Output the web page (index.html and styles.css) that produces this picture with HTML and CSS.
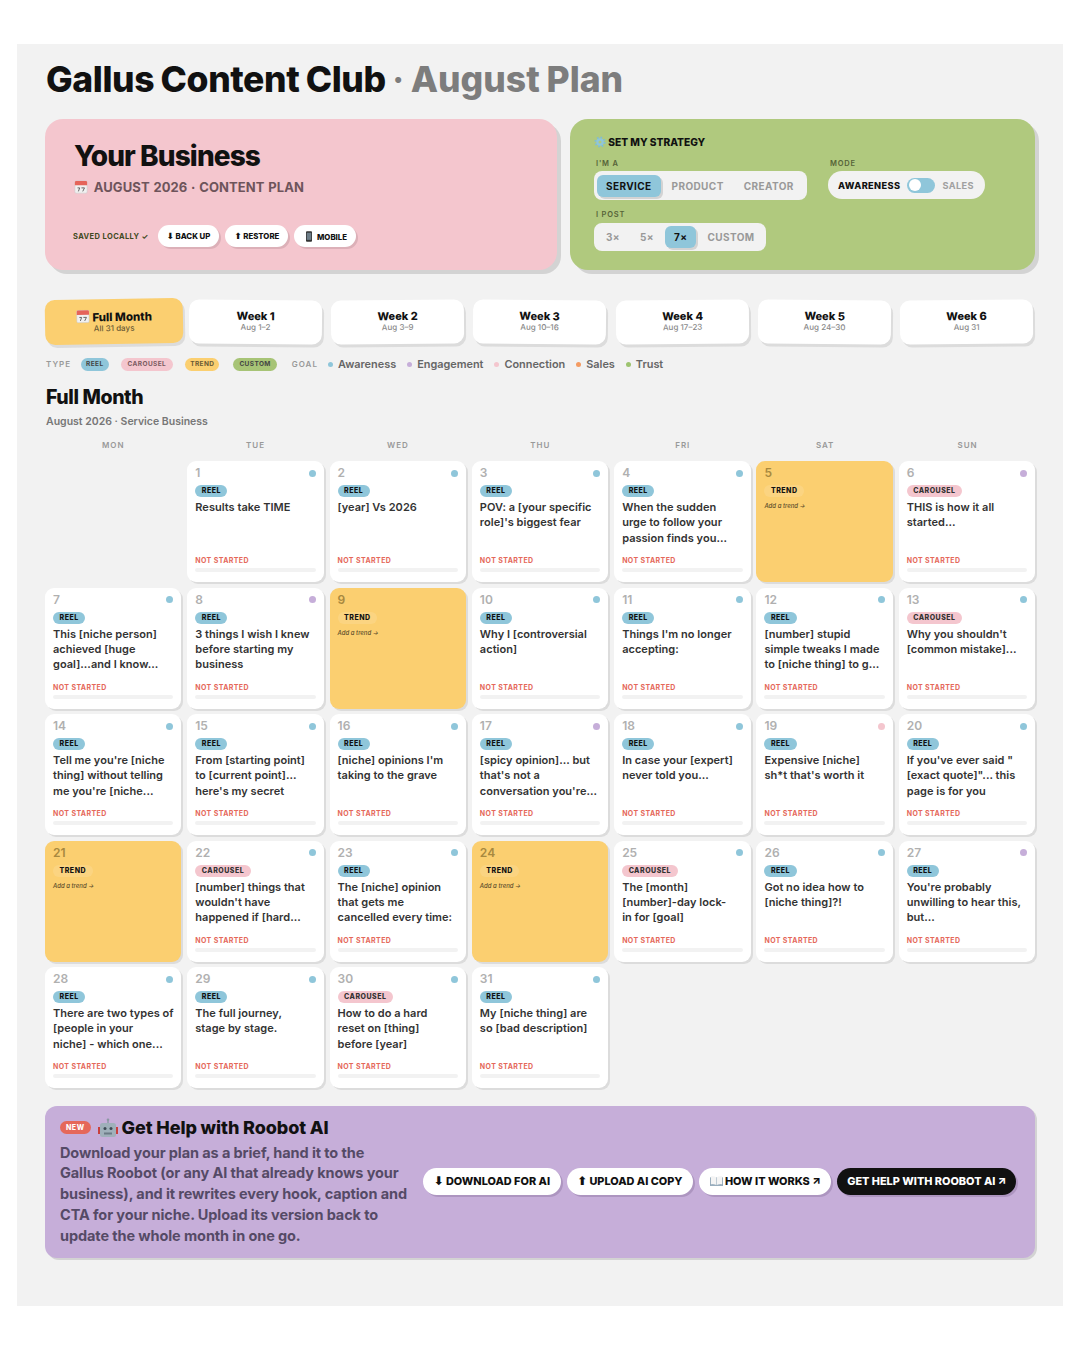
FILE: index.html
```html
<!DOCTYPE html>
<html lang="en">
<head>
  <meta charset="utf-8">
  <title>Gallus Content Club - August Plan</title>
  <link rel="stylesheet" href="styles.css">
</head>
<body>
<svg class="defs" width="0" height="0">
  <symbol id="cal" viewBox="0 0 16 16">
    <rect x="1" y="1" width="14" height="14" rx="1.5" fill="#f1f1f1" stroke="#c9c9c9" stroke-width=".6"/>
    <path d="M1 2.5A1.5 1.5 0 0 1 2.500 1h11A1.500 1.500 0 0 1 15 2.500V6H1z" fill="#e5645a"/>
    <path d="M4 9h2.500l-1.500 4M8.500 9h3.500l-2 4" fill="none" stroke="#555" stroke-width="1"/>
  </symbol>
  <symbol id="gear" viewBox="0 0 16 16">
    <circle cx="8" cy="8" r="6" fill="none" stroke="#7fbcd6" stroke-width="2.800" stroke-dasharray="2.200 2.500"/>
    <circle cx="8" cy="8" r="5" fill="#8fc6da"/>
    <circle cx="8" cy="8" r="2" fill="#b0c97e"/>
  </symbol>
  <symbol id="robot" viewBox="0 0 20 20">
    <circle cx="10" cy="1.800" r="1.300" fill="#8b98a3"/>
    <rect x="9.300" y="2.500" width="1.400" height="3" fill="#8b98a3"/>
    <rect x="0" y="9" width="2.500" height="7" fill="#c9403c"/>
    <rect x="17.500" y="9" width="2.500" height="7" fill="#c9403c"/>
    <rect x="2" y="5" width="16" height="14" rx="2.500" fill="#9fb0ba"/>
    <circle cx="7" cy="10.500" r="1.500" fill="#3d4a55"/>
    <circle cx="13" cy="10.500" r="1.500" fill="#3d4a55"/>
    <rect x="6" y="14.500" width="8" height="2" fill="#6c7b86"/>
  </symbol>
  <symbol id="book" viewBox="0 0 16 12">
    <path d="M0 1.500h16V12H0z" fill="#8aa2b4"/>
    <path d="M1 .5c2.500-.5 5-.3 6.700 1V11C6 10 3.500 9.800 1 10.300zM15 .5c-2.500-.5-5-.3-6.700 1V11c1.700-1 4.200-1.200 6.700-.7z" fill="#f4f4f4"/>
  </symbol>
  <symbol id="phone" viewBox="0 0 8 14">
    <rect width="8" height="14" rx="1.300" fill="#333"/>
    <rect x="1" y="2" width="6" height="9.500" fill="#6d7d88"/>
  </symbol>
</svg>

<main class="page">
  <h1 class="title">Gallus Content Club <span class="title-sub"><span class="title-dot">·</span> August Plan</span></h1>

  <section class="top">
    <div class="card-business">
      <h2>Your Business</h2>
      <p class="biz-sub"><svg class="ico-cal"><use href="#cal"/></svg> AUGUST 2026 · CONTENT PLAN</p>
      <div class="biz-actions">
        <span class="saved">SAVED LOCALLY ✓</span>
        <button class="btn-small"><span class="arrow">⬇</span> BACK UP</button>
        <button class="btn-small"><span class="arrow">⬆</span> RESTORE</button>
        <button class="btn-small"><svg class="ico-phone"><use href="#phone"/></svg> MOBILE</button>
      </div>
    </div>

    <div class="card-strategy">
      <h3><svg class="ico-gear"><use href="#gear"/></svg> SET MY STRATEGY</h3>
      <div class="strategy-row">
        <div>
          <div class="lbl">I'M A</div>
          <div class="seg">
            <span class="seg-item on">SERVICE</span>
            <span class="seg-item">PRODUCT</span>
            <span class="seg-item">CREATOR</span>
          </div>
        </div>
        <div class="mode">
          <div class="lbl">MODE</div>
          <div class="mode-pill">
            <span class="mode-on">AWARENESS</span>
            <span class="switch"><span class="knob"></span></span>
            <span class="mode-off">SALES</span>
          </div>
        </div>
      </div>
      <div class="lbl lbl-post">I POST</div>
      <div class="seg seg-post">
        <span class="seg-item">3×</span>
        <span class="seg-item">5×</span>
        <span class="seg-item on">7×</span>
        <span class="seg-item">CUSTOM</span>
      </div>
    </div>
  </section>

  <nav class="tabs">
    <div class="tab tab-month"><b><svg class="ico-cal"><use href="#cal"/></svg> Full Month</b><small>All 31 days</small></div>
    <div class="tab tilt-a"><b>Week 1</b><small>Aug 1–2</small></div>
    <div class="tab tilt-b"><b>Week 2</b><small>Aug 3–9</small></div>
    <div class="tab tilt-a"><b>Week 3</b><small>Aug 10–16</small></div>
    <div class="tab tilt-b"><b>Week 4</b><small>Aug 17–23</small></div>
    <div class="tab tilt-a"><b>Week 5</b><small>Aug 24–30</small></div>
    <div class="tab tilt-b"><b>Week 6</b><small>Aug 31</small></div>
  </nav>

  <div class="legend">
    <span class="leg-title">TYPE</span>
    <span class="pill reel">REEL</span>
    <span class="pill carousel">CAROUSEL</span>
    <span class="pill trend-pill">TREND</span>
    <span class="pill custom">CUSTOM</span>
    <span class="leg-title leg-goal">GOAL</span>
    <span class="goal"><i class="dot blue"></i>Awareness</span>
    <span class="goal"><i class="dot purple"></i>Engagement</span>
    <span class="goal"><i class="dot pink"></i>Connection</span>
    <span class="goal"><i class="dot orange"></i>Sales</span>
    <span class="goal"><i class="dot green"></i>Trust</span>
  </div>

  <h2 class="month-title">Full Month</h2>
  <p class="month-sub">August 2026 · Service Business</p>

  <div class="days">
    <span>MON</span><span>TUE</span><span>WED</span><span>THU</span><span>FRI</span><span>SAT</span><span>SUN</span>
  </div>

  <div class="cal">
    <div class="blank"></div>
    <article class="day"><div class="num">1<i class="dot blue"></i></div><span class="tag reel">REEL</span><p>Results take TIME</p><div class="status">NOT STARTED</div><div class="bar"></div></article>
    <article class="day"><div class="num">2<i class="dot blue"></i></div><span class="tag reel">REEL</span><p>[year] Vs 2026</p><div class="status">NOT STARTED</div><div class="bar"></div></article>
    <article class="day"><div class="num">3<i class="dot blue"></i></div><span class="tag reel">REEL</span><p>POV: a [your specific<br>role]'s biggest fear</p><div class="status">NOT STARTED</div><div class="bar"></div></article>
    <article class="day"><div class="num">4<i class="dot blue"></i></div><span class="tag reel">REEL</span><p>When the sudden<br>urge to follow your<br>passion finds you...</p><div class="status">NOT STARTED</div><div class="bar"></div></article>
    <article class="day trend"><div class="num">5</div><span class="tag">TREND</span><em>Add a trend →</em></article>
    <article class="day"><div class="num">6<i class="dot purple"></i></div><span class="tag carousel">CAROUSEL</span><p>THIS is how it all<br>started...</p><div class="status">NOT STARTED</div><div class="bar"></div></article>

    <article class="day"><div class="num">7<i class="dot blue"></i></div><span class="tag reel">REEL</span><p>This [niche person]<br>achieved [huge<br>goal]...and I know...</p><div class="status">NOT STARTED</div><div class="bar"></div></article>
    <article class="day"><div class="num">8<i class="dot purple"></i></div><span class="tag reel">REEL</span><p>3 things I wish I knew<br>before starting my<br>business</p><div class="status">NOT STARTED</div><div class="bar"></div></article>
    <article class="day trend"><div class="num">9</div><span class="tag">TREND</span><em>Add a trend →</em></article>
    <article class="day"><div class="num">10<i class="dot blue"></i></div><span class="tag reel">REEL</span><p>Why I [controversial<br>action]</p><div class="status">NOT STARTED</div><div class="bar"></div></article>
    <article class="day"><div class="num">11<i class="dot blue"></i></div><span class="tag reel">REEL</span><p>Things I'm no longer<br>accepting:</p><div class="status">NOT STARTED</div><div class="bar"></div></article>
    <article class="day"><div class="num">12<i class="dot blue"></i></div><span class="tag reel">REEL</span><p>[number] stupid<br>simple tweaks I made<br>to [niche thing] to g...</p><div class="status">NOT STARTED</div><div class="bar"></div></article>
    <article class="day"><div class="num">13<i class="dot blue"></i></div><span class="tag carousel">CAROUSEL</span><p>Why you shouldn't<br>[common mistake]...</p><div class="status">NOT STARTED</div><div class="bar"></div></article>

    <article class="day"><div class="num">14<i class="dot blue"></i></div><span class="tag reel">REEL</span><p>Tell me you're [niche<br>thing] without telling<br>me you're [niche...</p><div class="status">NOT STARTED</div><div class="bar"></div></article>
    <article class="day"><div class="num">15<i class="dot blue"></i></div><span class="tag reel">REEL</span><p>From [starting point]<br>to [current point]...<br>here's my secret</p><div class="status">NOT STARTED</div><div class="bar"></div></article>
    <article class="day"><div class="num">16<i class="dot blue"></i></div><span class="tag reel">REEL</span><p>[niche] opinions I'm<br>taking to the grave</p><div class="status">NOT STARTED</div><div class="bar"></div></article>
    <article class="day"><div class="num">17<i class="dot purple"></i></div><span class="tag reel">REEL</span><p>[spicy opinion]... but<br>that's not a<br>conversation you're...</p><div class="status">NOT STARTED</div><div class="bar"></div></article>
    <article class="day"><div class="num">18<i class="dot blue"></i></div><span class="tag reel">REEL</span><p>In case your [expert]<br>never told you...</p><div class="status">NOT STARTED</div><div class="bar"></div></article>
    <article class="day"><div class="num">19<i class="dot pink"></i></div><span class="tag reel">REEL</span><p>Expensive [niche]<br>sh*t that's worth it</p><div class="status">NOT STARTED</div><div class="bar"></div></article>
    <article class="day"><div class="num">20<i class="dot blue"></i></div><span class="tag reel">REEL</span><p>If you've ever said "<br>[exact quote]"... this<br>page is for you</p><div class="status">NOT STARTED</div><div class="bar"></div></article>

    <article class="day trend"><div class="num">21</div><span class="tag">TREND</span><em>Add a trend →</em></article>
    <article class="day"><div class="num">22<i class="dot blue"></i></div><span class="tag carousel">CAROUSEL</span><p>[number] things that<br>wouldn't have<br>happened if [hard...</p><div class="status">NOT STARTED</div><div class="bar"></div></article>
    <article class="day"><div class="num">23<i class="dot blue"></i></div><span class="tag reel">REEL</span><p>The [niche] opinion<br>that gets me<br>cancelled every time:</p><div class="status">NOT STARTED</div><div class="bar"></div></article>
    <article class="day trend"><div class="num">24</div><span class="tag">TREND</span><em>Add a trend →</em></article>
    <article class="day"><div class="num">25<i class="dot blue"></i></div><span class="tag carousel">CAROUSEL</span><p>The [month]<br>[number]-day lock-<br>in for [goal]</p><div class="status">NOT STARTED</div><div class="bar"></div></article>
    <article class="day"><div class="num">26<i class="dot blue"></i></div><span class="tag reel">REEL</span><p>Got no idea how to<br>[niche thing]?!</p><div class="status">NOT STARTED</div><div class="bar"></div></article>
    <article class="day"><div class="num">27<i class="dot purple"></i></div><span class="tag reel">REEL</span><p>You're probably<br>unwilling to hear this,<br>but...</p><div class="status">NOT STARTED</div><div class="bar"></div></article>

    <article class="day"><div class="num">28<i class="dot blue"></i></div><span class="tag reel">REEL</span><p>There are two types of<br>[people in your<br>niche] - which one...</p><div class="status">NOT STARTED</div><div class="bar"></div></article>
    <article class="day"><div class="num">29<i class="dot blue"></i></div><span class="tag reel">REEL</span><p>The full journey,<br>stage by stage.</p><div class="status">NOT STARTED</div><div class="bar"></div></article>
    <article class="day"><div class="num">30<i class="dot blue"></i></div><span class="tag carousel">CAROUSEL</span><p>How to do a hard<br>reset on [thing]<br>before [year]</p><div class="status">NOT STARTED</div><div class="bar"></div></article>
    <article class="day"><div class="num">31<i class="dot blue"></i></div><span class="tag reel">REEL</span><p>My [niche thing] are<br>so [bad description]</p><div class="status">NOT STARTED</div><div class="bar"></div></article>
  </div>

  <section class="help">
    <div class="help-text">
      <h3><span class="new">NEW</span><svg class="ico-robot"><use href="#robot"/></svg> Get Help with Roobot AI</h3>
      <p>Download your plan as a brief, hand it to the<br>Gallus Roobot (or any AI that already knows your<br>business), and it rewrites every hook, caption and<br>CTA for your niche. Upload its version back to<br>update the whole month in one go.</p>
    </div>
    <div class="help-actions">
      <button class="btn"><span class="arrow">⬇</span> DOWNLOAD FOR AI</button>
      <button class="btn"><span class="arrow">⬆</span> UPLOAD AI COPY</button>
      <button class="btn"><svg class="ico-book"><use href="#book"/></svg> HOW IT WORKS ↗</button>
      <button class="btn btn-dark">GET HELP WITH ROOBOT AI ↗</button>
    </div>
  </section>
</main>
</body>
</html>
```

FILE: styles.css
```css
* {
  box-sizing: border-box;
}

body {
  margin: 0;
  background: #fff;
  font-family: Inter, "Open Sans", sans-serif;
  color: #111;
}

.defs {
  position: absolute;
}

.page {
  margin: 44px 17px;
  height: 1262px;
  padding: 14px 28px 0;
  background: #f2f2f2;
}

.title {
  margin: 0 0 17px 1px;
  font-size: 35.5px;
  line-height: 44px;
  font-weight: 800;
  letter-spacing: -0.4px;
  word-spacing: -1px;
  white-space: nowrap;
}

.title-sub {
  letter-spacing: 0;
  color: #7d7d7d;
}

.title-dot {
  font-weight: 700;
}

/* top cards */
.top {
  display: flex;
  gap: 13px;
  height: 151px;
  margin-bottom: 30px;
}

.card-business {
  width: 512px;
  padding: 21px 28px 0;
  background: #f4c6ce;
  border-radius: 18px;
  box-shadow: 4px 4px 0 #d3d3d3;
}

.card-business h2 {
  margin: 0 0 0 1px;
  font-size: 28px;
  line-height: 32px;
  font-weight: 800;
  letter-spacing: -0.9px;
}

.biz-sub {
  margin: 6px 0 0 1px;
  font-size: 13px;
  line-height: 18px;
  font-weight: 700;
  color: #6e545b;
  letter-spacing: 0.1px;
  word-spacing: 0.5px;
}

.biz-sub .ico-cal {
  margin-right: 2px;
}

.ico-cal {
  width: 14px;
  height: 14px;
  vertical-align: -2px;
}

.biz-actions {
  display: flex;
  align-items: center;
  gap: 6px;
  margin-top: 29px;
}

.saved {
  margin-right: 3px;
  font-size: 7.5px;
  font-weight: 700;
  color: #3f4a22;
  letter-spacing: 0.4px;
}

.btn-small {
  height: 22px;
  padding: 0 9px;
  border: 0;
  border-radius: 11px;
  background: #fff;
  box-shadow: 2px 2px 0 #dcb0b8;
  font-family: inherit;
  font-size: 7.8px;
  font-weight: 800;
  color: #111;
  white-space: nowrap;
}

.arrow {
  font-family: "DejaVu Sans", sans-serif;
  font-size: 1.100em;
}

.ico-phone {
  width: 6px;
  height: 11px;
  margin: 0 3px;
  vertical-align: -2px;
}

.card-strategy {
  width: 465px;
  padding: 16px 24px 0;
  background: #b0c97e;
  border-radius: 18px;
  box-shadow: 4px 4px 0 #d3d3d3;
}

.card-strategy h3 {
  margin: 0;
  font-size: 10.2px;
  line-height: 14px;
  font-weight: 800;
}

.ico-gear {
  width: 12px;
  height: 12px;
  vertical-align: -2px;
}

.strategy-row {
  display: flex;
  gap: 21px;
  margin-top: 10px;
}

.lbl {
  font-size: 7.5px;
  line-height: 10px;
  font-weight: 600;
  letter-spacing: 0.8px;
  color: #566338;
  margin-left: 2px;
  margin-bottom: 2px;
}

.lbl-post {
  margin-top: 10px;
  margin-bottom: 3px;
}

.seg {
  display: flex;
  align-items: center;
  width: 213px;
  height: 29px;
  padding: 3px;
  background: #f2f2f2;
  border-radius: 8px;
  font-size: 10px;
  font-weight: 700;
  letter-spacing: 0.4px;
  color: #999;
}

.seg-post {
  width: 172px;
  height: 28px;
}

.seg-item {
  padding: 0 9px;
  margin-right: 2px;
  line-height: 22px;
  border-radius: 6px;
  white-space: nowrap;
}

.seg-item.on {
  background: #8fc6da;
  color: #111;
  box-shadow: 2px 2px 0 #d3d3d3;
}

.mode .lbl {
  margin-bottom: 2px;
}

.mode-pill {
  display: flex;
  align-items: center;
  gap: 7px;
  width: 157px;
  height: 28px;
  padding: 0 10px;
  background: #f2f2f2;
  border-radius: 14px;
  font-size: 9.2px;
  font-weight: 800;
  letter-spacing: 0.4px;
  white-space: nowrap;
}

.mode-off {
  color: #a0a0a0;
  font-weight: 700;
}

.switch {
  display: block;
  flex: none;
  width: 28px;
  height: 15px;
  padding: 1.5px;
  background: #8fc6da;
  border-radius: 8px;
}

.knob {
  display: block;
  width: 12px;
  height: 12px;
  background: #fff;
  border-radius: 50%;
}

/* week tabs */
.tabs {
  display: flex;
  gap: 9px;
  padding-right: 2px;
  margin-bottom: 13px;
}

.tab {
  flex: 1;
  height: 44px;
  padding-top: 10px;
  text-align: center;
  background: #fff;
  border-radius: 10px;
  box-shadow: 2px 3px 0 #dcdcdc;
}

.tab b {
  display: block;
  font-size: 11px;
  line-height: 12px;
  font-weight: 800;
}

.tab small {
  display: block;
  font-size: 8px;
  line-height: 10px;
  font-weight: 500;
  color: #8a8a8a;
}

.tab-month {
  flex: 0 0 138px;
  margin-right: -3px;
  height: 45px;
  margin-top: -1px;
  background: #fbcf70;
  transform: rotate(-1deg);
}

.tab-month b {
  font-size: 11.5px;
}

.tab-month small {
  color: #6a5a35;
}

.tilt-a {
  transform: rotate(0.6deg);
}

.tilt-b {
  transform: rotate(-0.5deg);
}

/* legend */
.legend {
  display: flex;
  align-items: center;
  height: 14px;
  margin-left: 1px;
}

.leg-title {
  margin-right: 10px;
  font-size: 8px;
  font-weight: 600;
  letter-spacing: 1px;
  color: #999;
}

.leg-goal {
  margin-left: 3px;
}

.pill {
  margin-right: 12px;
  padding: 0 6px;
  font-size: 6.5px;
  line-height: 13px;
  font-weight: 700;
  letter-spacing: 0.4px;
  border-radius: 7px;
  color: #444;
}

.pill.reel {
  padding: 0 5px;
  background: #8fc6da;
}

.pill.carousel {
  padding: 0 7px;
  background: #f4c6ce;
  color: #7a5a60;
}

.pill.trend-pill {
  padding: 0 5px;
  margin-right: 14px;
  background: #fbcf70;
  color: #6a5a35;
}

.pill.custom {
  background: #a7c476;
}

.goal {
  margin-right: 11px;
  font-size: 10.9px;
  font-weight: 600;
  color: #666;
  white-space: nowrap;
}

.goal .dot {
  margin-right: 5px;
  vertical-align: 1px;
  width: 5px;
  height: 5px;
}

.dot {
  display: inline-block;
  width: 7px;
  height: 7px;
  border-radius: 50%;
}

.blue {
  background: #8fc6da;
}

.purple {
  background: #c6aed9;
}

.pink {
  background: #f4c6ce;
}

.orange {
  background: #f49b62;
}

.green {
  background: #9dc36f;
}

/* month heading */
.month-title {
  margin: 12px 0 0 1px;
  font-size: 19.5px;
  line-height: 28px;
  font-weight: 800;
  letter-spacing: -0.4px;
}

.month-sub {
  margin: 4px 0 0 1px;
  font-size: 10.5px;
  line-height: 14px;
  font-weight: 600;
  color: #777;
}

.days {
  display: grid;
  grid-template-columns: repeat(7, 136.4px);
  gap: 6px;
  margin-top: 10px;
  text-align: center;
  font-size: 8px;
  line-height: 12px;
  font-weight: 600;
  letter-spacing: 1px;
  color: #999;
}

/* calendar */
.cal {
  display: grid;
  grid-template-columns: repeat(7, 136.4px);
  grid-auto-rows: 121px;
  gap: 5.5px 5.9px;
  margin-top: 10px;
}

.day {
  display: flex;
  flex-direction: column;
  align-items: flex-start;
  padding: 5px 8px 10px;
  background: #fff;
  border-radius: 9px;
  box-shadow: 2px 2px 0 #dcdcdc;
}

.num {
  display: flex;
  justify-content: space-between;
  align-items: center;
  align-self: stretch;
  font-size: 12px;
  line-height: 14px;
  font-weight: 600;
  color: #b0b0b0;
}

.tag {
  margin-top: 5px;
  padding: 0 6.5px;
  font-size: 7px;
  line-height: 12px;
  font-weight: 800;
  letter-spacing: 0.5px;
  border-radius: 6px;
}

.tag.reel {
  background: #8fc6da;
}

.tag.carousel {
  background: #f4c6ce;
  color: #333;
}

.day p {
  flex: 1;
  margin: 3px 0 0;
  font-size: 11px;
  line-height: 15.4px;
  font-weight: 600;
  letter-spacing: 0.03px;
  color: #333;
  white-space: nowrap;
}

.status {
  font-size: 7px;
  line-height: 10px;
  font-weight: 700;
  letter-spacing: 0.4px;
  color: #e5685a;
}

.bar {
  align-self: stretch;
  height: 4px;
  margin-top: 2px;
  background: #f2f2f2;
  border-radius: 2px;
}

.day.trend {
  background: #fbcf70;
}

.day.trend .tag {
  background: rgba(255, 255, 255, 0.12);
}

.day.trend .num {
  color: #a8893f;
}

.day.trend em {
  margin-top: 3px;
  font-size: 6px;
  line-height: 12px;
  font-weight: 500;
  color: #5a4c2a;
}

/* roobot banner */
.help {
  display: flex;
  align-items: center;
  width: 990px;
  height: 152px;
  margin-top: 18px;
  padding: 0 15px 2px;
  background: #c6aed9;
  border-radius: 12px;
  box-shadow: 2px 2px 0 #d3d3d3;
}

.help-text {
  flex: none;
  width: 363px;
}

.help-text h3 {
  display: flex;
  align-items: center;
  gap: 4px;
  margin: 0 0 3px;
  font-size: 18px;
  line-height: 24px;
  font-weight: 800;
  letter-spacing: -0.1px;
}

.new {
  margin-right: 3px;
  padding: 0 6px;
  background: #e5685a;
  border-radius: 7px;
  color: #fff;
  font-size: 7px;
  line-height: 13px;
  font-weight: 800;
  letter-spacing: 0.5px;
}

.ico-robot {
  width: 20px;
  height: 20px;
}

.help-text p {
  margin: 0;
  font-size: 14.5px;
  line-height: 20.7px;
  font-weight: 700;
  letter-spacing: -0.1px;
  color: #554a66;
  white-space: nowrap;
}

.help-actions {
  display: flex;
  gap: 6px;
}

.btn {
  height: 27px;
  padding: 0 10.5px;
  border: 0;
  border-radius: 14px;
  background: #fff;
  box-shadow: 2px 2px 0 #ad95c0;
  font-family: inherit;
  font-size: 10.9px;
  font-weight: 800;
  color: #111;
  white-space: nowrap;
}

.btn-dark {
  padding: 0 10px;
  background: #111;
  color: #fff;
}

.ico-book {
  width: 13px;
  height: 10px;
  vertical-align: -1px;
}
```
